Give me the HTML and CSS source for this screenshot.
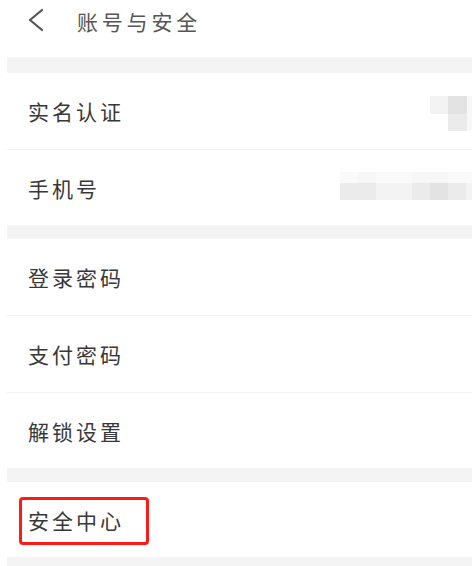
FILE: index.html
```html
<!DOCTYPE html>
<html lang="zh-CN">
<head>
<meta charset="utf-8">
<title>账号与安全</title>
<link rel="stylesheet" href="styles.css">
</head>
<body>
<div class="page">
  <header class="header">
    <svg class="back" width="17" height="24" viewBox="0 0 17 24" aria-hidden="true">
      <polyline points="15,2 3,12 15,22" fill="none" stroke="#555" stroke-width="2.2" stroke-linecap="round" stroke-linejoin="round"/>
    </svg>
    <div class="title">账号与安全</div>
  </header>
  <div class="list">
    <div class="gap gap-top"></div>
    <div class="row"><span class="label">实名认证</span>
      <div class="mosaic m1">
        <div class="mrow h18"><i class="w18 s3"></i><i class="w19 s6"></i><i class="w5 s2"></i></div>
        <div class="mrow h17"><i class="w18 s0"></i><i class="w19 s5"></i><i class="w5 s2"></i></div>
      </div>
    </div>
    <div class="row last"><span class="label">手机号</span>
      <div class="mosaic m2">
        <div class="mrow h11"><i class="w18 s1"></i><i class="w18 s2"></i><i class="w18 s1"></i><i class="w18 s1"></i><i class="w18 s2"></i><i class="w18 s2"></i><i class="w18 s1"></i><i class="w6 s1"></i></div>
        <div class="mrow h17"><i class="w18 s5"></i><i class="w18 s5"></i><i class="w18 s3"></i><i class="w18 s3"></i><i class="w18 s5"></i><i class="w18 s6"></i><i class="w18 s5"></i><i class="w6 s3"></i></div>
      </div>
    </div>
    <div class="gap"></div>
    <div class="row"><span class="label">登录密码</span></div>
    <div class="row"><span class="label">支付密码</span></div>
    <div class="row last"><span class="label">解锁设置</span></div>
    <div class="gap"></div>
    <div class="row last hl-row"><span class="label">安全中心</span><span class="highlight"></span></div>
    <div class="gap gap-bottom"></div>
  </div>
</div>
</body>
</html>
```
FILE: styles.css
```css
* { box-sizing: border-box; }
html, body { margin: 0; padding: 0; background: #fff; }
body {
  width: 472px;
  height: 566px;
  overflow: hidden;
  font-family: "Noto Sans CJK SC", "Noto Sans", sans-serif;
  color: #333;
}
.header {
  height: 57px;
  display: flex;
  align-items: flex-start;
  padding-top: 8px;
}
.back {
  margin-left: 27px;
  display: block;
}
.title {
  margin-left: 33px;
  margin-top: 1px;
  font-size: 21px;
  line-height: 24px;
  letter-spacing: 3.8px;
  color: #555;
}
.list { margin-left: 7px; }
.gap { height: 14px; background: #f4f4f4; }
.gap-top { height: 16px; }
.gap-bottom { height: 9px; }
.row {
  height: 77px;
  border-bottom: 1px solid #f3f3f3;
  display: flex;
  align-items: center;
  justify-content: space-between;
  padding-left: 21px;
  position: relative;
}
.row.last { height: 75px; border-bottom: none; }
.label {
  font-size: 21px;
  line-height: 24px;
  letter-spacing: 3px;
  color: #383838;
}
.mosaic { display: flex; flex-direction: column; align-self: flex-start; }
.m1 { margin-top: 23px; }
.m2 { margin-top: 22px; }
.mrow { display: flex; }
.mrow i { display: block; }
.h11 { height: 11px; }
.h17 { height: 17px; }
.h18 { height: 18px; }
.w5 { width: 5px; }
.w6 { width: 6px; }
.w18 { width: 18px; }
.w19 { width: 19px; }
.s0 { background: #ffffff; }
.s1 { background: #fafafa; }
.s2 { background: #f7f7f7; }
.s3 { background: #f3f3f3; }
.s5 { background: #ebebeb; }
.s6 { background: #e3e3e3; }
.highlight {
  position: absolute;
  left: 12px;
  top: 15px;
  width: 130px;
  height: 48px;
  border: 3px solid #ff1a1a;
  border-radius: 4px;
}
```
